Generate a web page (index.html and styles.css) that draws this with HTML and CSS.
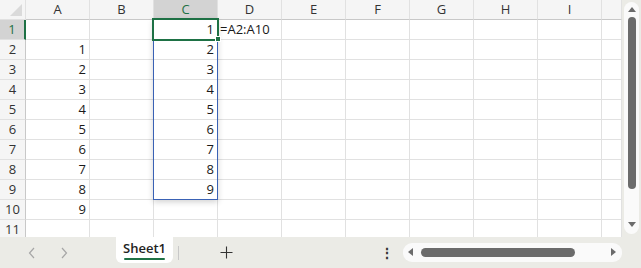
FILE: index.html
```html
<!DOCTYPE html>
<html lang="en">
<head>
    <meta charset="UTF-8">
    <title>Book1 - Sheet1</title>
    <link rel="stylesheet" href="styles.css">
</head>
<body>
    <div class="sheet">
        <div class="grid" id="grid"></div>

        <div class="vscroll">
            <div class="vtrack">
                <span class="tri up"></span>
                <div class="vthumb"></div>
                <span class="tri down"></span>
            </div>
        </div>

        <!-- spill range + active cell sit on top of the grid -->
        <div class="spill"></div>
        <div class="active"></div>
        <div class="handle"></div>
    </div>

    <div class="tabbar">
        <div class="nav">
            <svg width="8" height="12" viewBox="0 0 8 12"><path d="M6 1 L1.5 6 L6 11" fill="none" stroke="#a6a6a6" stroke-width="1.2"/></svg>
            <svg width="8" height="12" viewBox="0 0 8 12"><path d="M2 1 L6.5 6 L2 11" fill="none" stroke="#a6a6a6" stroke-width="1.2"/></svg>
        </div>
        <div class="tab">Sheet1</div>
        <div class="divider"></div>
        <svg class="add" width="13" height="13" viewBox="0 0 13 13"><path d="M6.5 0.5 V12.5 M0.5 6.5 H12.5" stroke="#333" stroke-width="1.1"/></svg>
        <div class="more">⋮</div>
        <div class="htrack">
            <span class="tri left"></span>
            <div class="hthumb"></div>
            <span class="tri right"></span>
        </div>
    </div>

    <script>
        const cols = ["A", "B", "C", "D", "E", "F", "G", "H", "I", ""];
        const grid = document.getElementById("grid");

        function cell(cls, text) {
            let div = document.createElement("div");
            div.className = cls;
            div.textContent = text || "";
            grid.appendChild(div);
        }

        // header row
        cell("corner");
        cols.forEach(c => cell(c === "C" ? "colhead sel" : "colhead", c));

        for (let r = 1; r <= 11; r++) {
            cell(r === 1 ? "rowhead sel" : "rowhead", r);
            cols.forEach(c => {
                let text = "";
                if (c === "A" && r >= 2 && r <= 10) text = r - 1;
                if (c === "C" && r <= 9) text = r;
                if (c === "D" && r === 1) text = "=A2:A10";
                cell(c === "D" ? "cell formula" : "cell", text);
            });
        }
    </script>
</body>
</html>
```

FILE: styles.css
```css
body {
    margin: 0;
    font-family: "Open Sans", "Noto Sans", sans-serif;
    color: #1a1a1a;
    background-color: #fff;
    overflow: hidden;
}
.sheet {
    position: relative;
    display: flex;
    height: 237px;
    overflow: hidden;
}
.grid {
    width: 622px;
    display: grid;
    grid-template-columns: 26px repeat(9, 64px) 20px;
    grid-auto-rows: 20px;
}
.grid div {
    box-sizing: border-box;
    border-right: 1px solid #e1e1e1;
    border-bottom: 1px solid #e1e1e1;
    font-size: 13px;
    line-height: 19px;
    white-space: nowrap;
}
.corner {
    background-color: #f5f5f5;
    position: relative;
}
.corner::after {
    content: "";
    position: absolute;
    right: 3px;
    bottom: 3px;
    border-left: 12px solid transparent;
    border-bottom: 12px solid #dadada;
}
.grid .colhead {
    background-color: #f5f5f5;
    border-bottom-color: #c8c8c8;
    text-align: center;
    color: #333;
}
.grid .rowhead {
    background-color: #f5f5f5;
    border-right-color: #c8c8c8;
    text-align: center;
    color: #333;
}
.grid .sel {
    background-color: #d3d3d3;
    color: #1e7145;
}
.grid .rowhead.sel {
    border-right: 2px solid #1e7145;
}
.cell {
    text-align: right;
    padding-right: 3px;
}
.grid .formula {
    text-align: left;
    padding-left: 2px;
    overflow: visible;
}
.vscroll {
    width: 19px;
    background-color: #ebebe6;
    padding: 2px;
}
.vtrack {
    position: relative;
    height: 232px;
    background-color: #fafafa;
    border-radius: 8px;
}
.vthumb {
    position: absolute;
    left: 4px;
    top: 15px;
    width: 8px;
    height: 172px;
    background-color: #6b6b6b;
    border-radius: 4px;
}
.tri {
    position: absolute;
    width: 0;
    height: 0;
}
.tri.up {
    left: 4px;
    top: 5px;
    border-left: 4px solid transparent;
    border-right: 4px solid transparent;
    border-bottom: 5px solid #6b6b6b;
}
.tri.down {
    left: 4px;
    bottom: 7px;
    border-left: 4px solid transparent;
    border-right: 4px solid transparent;
    border-top: 5px solid #6b6b6b;
}
.spill {
    position: absolute;
    left: 153px;
    top: 19px;
    width: 63px;
    height: 179px;
    border: 1px solid #3a62b5;
    box-shadow: 0 2px 6px rgba(0, 0, 0, 0.18);
}
.active {
    position: absolute;
    left: 152px;
    top: 18px;
    width: 63px;
    height: 19px;
    border: 2px solid #1e7145;
}
.handle {
    position: absolute;
    left: 215px;
    top: 36px;
    width: 4px;
    height: 4px;
    background-color: #1e7145;
    border: 1px solid #fff;
}
.tabbar {
    display: flex;
    align-items: center;
    height: 31px;
    background-color: #ebebe6;
}
.nav {
    display: flex;
    gap: 24px;
    margin-left: 28px;
    width: 88px;
}
.tab {
    align-self: flex-start;
    box-sizing: border-box;
    width: 57px;
    height: 26px;
    background-color: #fff;
    border-radius: 0 0 6px 6px;
    font-size: 13px;
    font-weight: 600;
    text-align: center;
    line-height: 23px;
    color: #222;
    position: relative;
}
.tab::after {
    content: "";
    position: absolute;
    left: 8px;
    right: 8px;
    bottom: 3px;
    height: 2px;
    background-color: #1e7145;
    border-radius: 1px;
}
.divider {
    width: 1px;
    height: 14px;
    background-color: #c8c8c8;
    margin-left: 5px;
}
.add {
    margin-left: 41px;
}
.more {
    margin-left: 147px;
    font-size: 14px;
    font-weight: bold;
    color: #333;
    width: 8px;
}
.htrack {
    position: relative;
    margin-left: 15px;
    width: 219px;
    height: 19px;
    background-color: #fafafa;
    border-radius: 9px;
}
.hthumb {
    position: absolute;
    left: 18px;
    top: 5px;
    width: 154px;
    height: 9px;
    background-color: #6b6b6b;
    border-radius: 5px;
}
.tri.left {
    left: 5px;
    top: 5px;
    border-top: 4px solid transparent;
    border-bottom: 4px solid transparent;
    border-right: 5px solid #6b6b6b;
}
.tri.right {
    right: 6px;
    top: 5px;
    border-top: 4px solid transparent;
    border-bottom: 4px solid transparent;
    border-left: 5px solid #6b6b6b;
}
```
